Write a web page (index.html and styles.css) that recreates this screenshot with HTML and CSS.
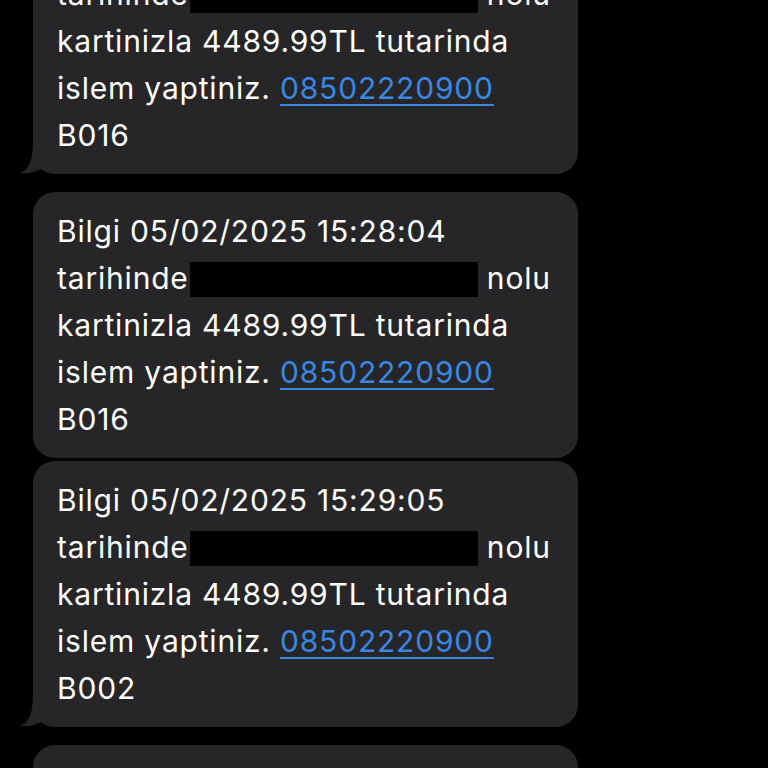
FILE: index.html
```html
<!DOCTYPE html>
<html lang="en">
<head>
    <meta charset="UTF-8">
    <meta name="viewport" content="width=device-width, initial-scale=1.0">
    <title>Mesajlar</title>
    <link rel="stylesheet" href="styles.css">
</head>
<body>
    <div class="thread">
        <div class="bubble tail">
            Bilgi 05/02/2025 15:27:41<br>
            tarihinde<span class="redact"></span> nolu<br>
            kartinizla 4489.99TL tutarinda<br>
            islem yaptiniz. <a href="#" class="link">08502220900</a><br>
            B016
            <svg class="tail-mark" viewBox="-14 -40 40 40" width="40" height="40"><path d="M0,-36 C0,-14 -3,-5 -13,-1 C-5,0 4,-2 9,-6 L22,-22 L0,-36 Z"/></svg>
        </div>
        <div class="bubble">
            Bilgi 05/02/2025 15:28:04<br>
            tarihinde<span class="redact"></span> nolu<br>
            kartinizla 4489.99TL tutarinda<br>
            islem yaptiniz. <a href="#" class="link">08502220900</a><br>
            B016
        </div>
        <div class="bubble tail">
            Bilgi 05/02/2025 15:29:05<br>
            tarihinde<span class="redact"></span> nolu<br>
            kartinizla 4489.99TL tutarinda<br>
            islem yaptiniz. <a href="#" class="link">08502220900</a><br>
            B002
            <svg class="tail-mark" viewBox="-14 -40 40 40" width="40" height="40"><path d="M0,-36 C0,-14 -3,-5 -13,-1 C-5,0 4,-2 9,-6 L22,-22 L0,-36 Z"/></svg>
        </div>
        <div class="bubble">
            Bilgi 05/02/2025 15:30:12<br>
            tarihinde<span class="redact"></span> nolu<br>
            kartinizla 4489.99TL tutarinda<br>
            islem yaptiniz. <a href="#" class="link">08502220900</a><br>
            B002
        </div>
    </div>
</body>
</html>
```

FILE: styles.css
```css
html, body {
    background: #000;
}
body {
    margin: 0;
    font-family: Inter, "Liberation Sans", sans-serif;
    color: #fff;
    overflow: hidden;
    height: 768px;
}
.thread {
    display: flex;
    flex-direction: column;
    align-items: flex-start;
    gap: 3px;
    padding-left: 33px;
    margin-top: -92px;
}
.bubble {
    position: relative;
    width: 545px;
    box-sizing: border-box;
    padding: 16px 20px 15px 24px;
    background: #262628;
    border-radius: 22px;
    font-size: 30px;
    line-height: 47px;
    letter-spacing: 0.8px;
}
.bubble.tail {
    margin-bottom: 15px;
}
.tail-mark {
    position: absolute;
    left: -14px;
    bottom: 0;
    fill: #262628;
    overflow: visible;
}
.redact {
    display: inline-block;
    width: 288px;
    height: 35px;
    margin-left: 1px;
    background: #000;
    vertical-align: -8px;
}
.link {
    color: #3a86e0;
    text-decoration: underline;
    text-decoration-thickness: 2px;
    text-underline-offset: 5px;
}
```
